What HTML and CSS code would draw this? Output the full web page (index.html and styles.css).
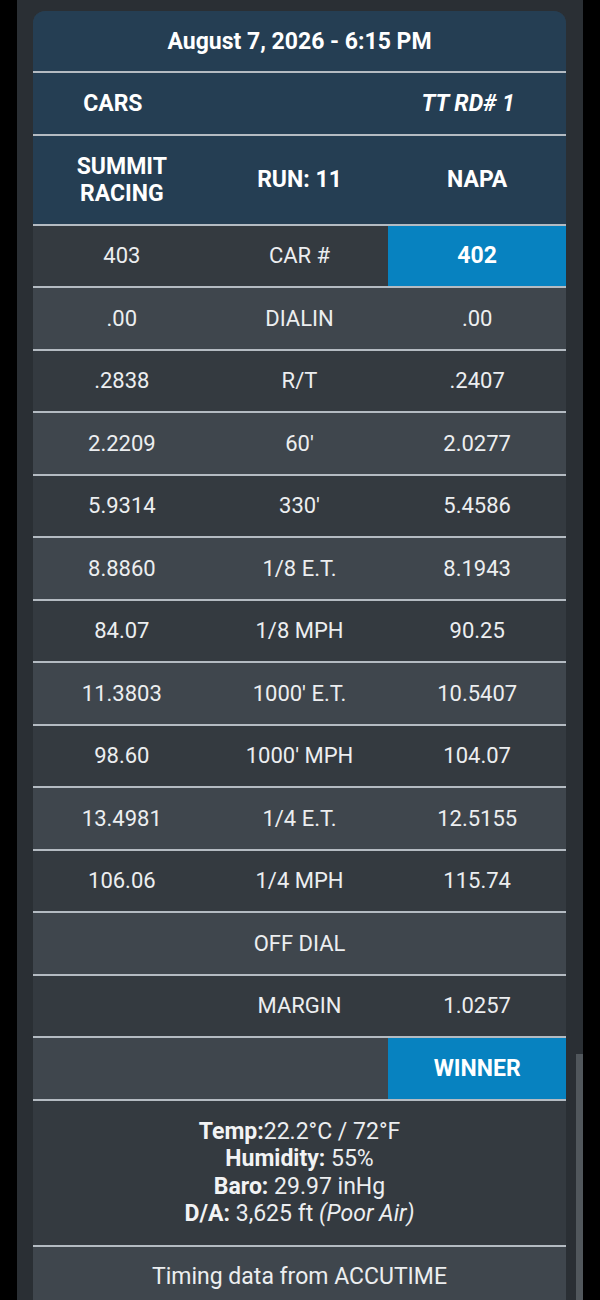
FILE: index.html
```html
<!DOCTYPE html>
<html lang="en">
<head>
    <meta charset="UTF-8">
    <meta name="viewport" content="width=device-width, initial-scale=1.0">
    <title>Run Results</title>
    <link rel="stylesheet" href="styles.css">
</head>
<body>
    <div class="screen">
        <div class="card">
            <div class="row head date">August 7, 2026 - 6:15 PM</div>
            <div class="row head cols">
                <div class="cars">CARS</div>
                <div></div>
                <div class="round">TT RD# 1</div>
            </div>
            <div class="row head cols tall">
                <div>SUMMIT<br>RACING</div>
                <div>RUN: 11</div>
                <div>NAPA</div>
            </div>

            <div class="row cols">
                <div>403</div>
                <div>CAR #</div>
                <div class="win">402</div>
            </div>
            <div class="row cols alt">
                <div>.00</div>
                <div>DIALIN</div>
                <div>.00</div>
            </div>
            <div class="row cols">
                <div>.2838</div>
                <div>R/T</div>
                <div>.2407</div>
            </div>
            <div class="row cols alt">
                <div>2.2209</div>
                <div>60'</div>
                <div>2.0277</div>
            </div>
            <div class="row cols">
                <div>5.9314</div>
                <div>330'</div>
                <div>5.4586</div>
            </div>
            <div class="row cols alt">
                <div>8.8860</div>
                <div>1/8 E.T.</div>
                <div>8.1943</div>
            </div>
            <div class="row cols">
                <div>84.07</div>
                <div>1/8 MPH</div>
                <div>90.25</div>
            </div>
            <div class="row cols alt">
                <div>11.3803</div>
                <div>1000' E.T.</div>
                <div>10.5407</div>
            </div>
            <div class="row cols">
                <div>98.60</div>
                <div>1000' MPH</div>
                <div>104.07</div>
            </div>
            <div class="row cols alt">
                <div>13.4981</div>
                <div>1/4 E.T.</div>
                <div>12.5155</div>
            </div>
            <div class="row cols">
                <div>106.06</div>
                <div>1/4 MPH</div>
                <div>115.74</div>
            </div>
            <div class="row cols alt">
                <div></div>
                <div>OFF DIAL</div>
                <div></div>
            </div>
            <div class="row cols">
                <div></div>
                <div>MARGIN</div>
                <div>1.0257</div>
            </div>
            <div class="row cols alt">
                <div></div>
                <div></div>
                <div class="win">WINNER</div>
            </div>

            <div class="row weather">
                <div><b>Temp:</b>22.2°C / 72°F</div>
                <div><b>Humidity:</b> 55%</div>
                <div><b>Baro:</b> 29.97 inHg</div>
                <div><b>D/A:</b> 3,625 ft <i>(Poor Air)</i></div>
            </div>
            <div class="row alt footer">Timing data from ACCUTIME</div>
        </div>
        <div class="scroll-thumb"></div>
    </div>
</body>
</html>
```

FILE: styles.css
```css
body {
    margin: 0;
    padding: 0;
    background-color: #000;
    font-family: Roboto, "Noto Sans", sans-serif;
    color: #eceef0;
}
.screen {
    position: relative;
    width: 566px;
    height: 1300px;
    margin-left: 17px;
    background-color: #2a2f34;
    padding: 11px 0 0 16px;
    box-sizing: border-box;
    overflow: hidden;
}
.card {
    width: 533px;
    border-top-left-radius: 12px;
    border-top-right-radius: 12px;
    overflow: hidden;
    background-color: #343a40;
}
.row {
    height: 62.5px;
    box-sizing: border-box;
    border-bottom: 2px solid #b4bbc2;
    font-size: 22px;
    background-color: #343a40;
}
.row.alt {
    background-color: #3f464d;
}
.cols {
    display: grid;
    grid-template-columns: repeat(3, 1fr);
    text-align: center;
}
.cols > div {
    display: flex;
    align-items: center;
    justify-content: center;
}
.head {
    background-color: #253e53;
    font-weight: bold;
    font-size: 23px;
    color: #fff;
}
.date {
    height: 62px;
    display: flex;
    align-items: center;
    justify-content: center;
}
.tall {
    height: 90px;
    line-height: 27px;
}
.cars {
    padding-right: 18px;
}
.round {
    font-style: italic;
    padding-right: 18px;
}
.win {
    background-color: #0782c0;
    color: #fff;
    font-weight: bold;
    font-size: 23px;
}
.weather {
    height: 146px;
    display: flex;
    flex-direction: column;
    justify-content: center;
    text-align: center;
    font-size: 23px;
    line-height: 27.3px;
}
.weather b {
    color: #f2f3f4;
}
.footer {
    height: 64px;
    border-bottom: none;
    display: flex;
    align-items: center;
    justify-content: center;
    font-size: 23px;
    padding-bottom: 4px;
}
.scroll-thumb {
    position: absolute;
    right: 0;
    top: 1054px;
    width: 7px;
    height: 260px;
    background-color: #51575c;
}
```
